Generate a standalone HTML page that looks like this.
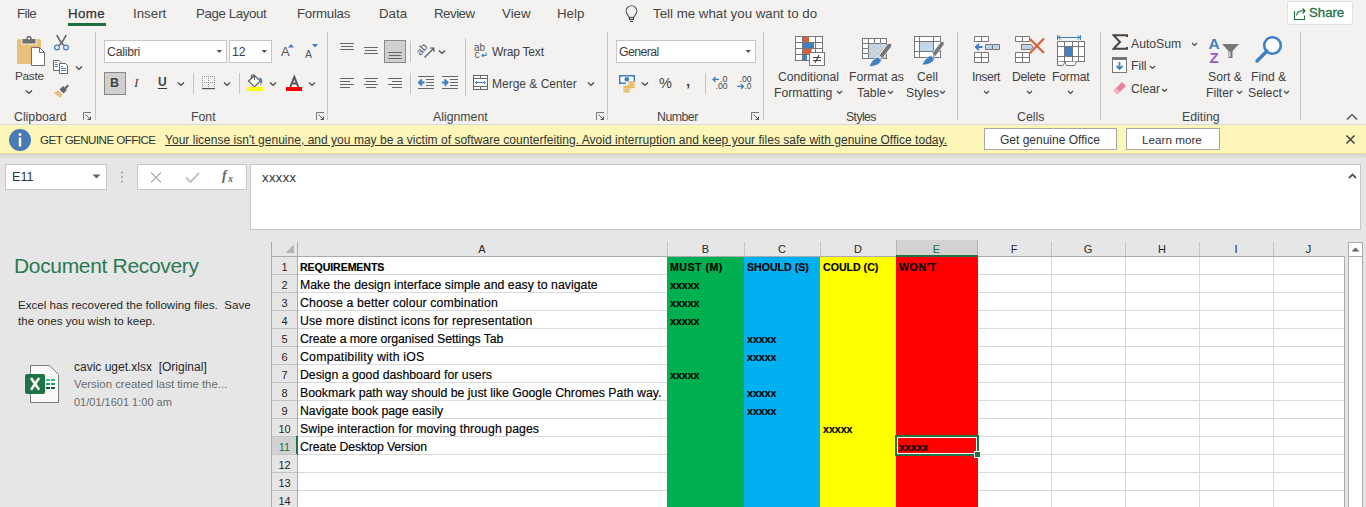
<!DOCTYPE html>
<html><head><meta charset="utf-8">
<style>
*{box-sizing:border-box;margin:0;padding:0}
html,body{width:1366px;height:507px;overflow:hidden;background:#e6e6e6;font-family:"Liberation Sans",sans-serif;color:#262626}
.a{position:absolute;white-space:pre}
#tabs{position:absolute;left:0;top:0;width:1366px;height:124px;background:#f3f2f1}
#ribbon{position:absolute;left:0;top:0;width:1366px;height:124px}
.tab{position:absolute;top:6px;font-size:13.3px;color:#444}
.sep{position:absolute;width:1px;background:#c8c6c4}
.glabel{position:absolute;top:110px;font-size:12.3px;color:#444}
.rt{position:absolute;font-size:12.6px;color:#404040;white-space:pre}
#banner{position:absolute;left:0;top:124px;width:1366px;height:30px;background:#fcf6b8;border-top:1px solid #d9d9d9;border-bottom:1px solid #e4da9a}
#fbar{position:absolute;left:0;top:154px;width:1366px;height:86px;background:#e6e6e6}
#grid{position:absolute;left:271px;top:241px;width:1095px;height:266px;background:#fff}
.ch{position:absolute;top:0;height:16px;font-size:11.5px;text-align:center;color:#262626;background:#e6e6e6}
.rh{position:absolute;left:0;width:26px;font-size:12px;text-align:center;color:#262626}
.cell{position:absolute;font-size:12.3px;color:#000;white-space:pre;-webkit-text-stroke:0.15px #000}
</style></head><body>
<div id="tabs">
  <span class="tab" style="left:17px;letter-spacing:-0.6px">File</span>
  <span class="tab" style="left:68px;color:#333;-webkit-text-stroke:0.25px #333;letter-spacing:0.4px">Home</span>
  <div class="a" style="left:68px;top:23px;width:38px;height:3px;background:#1e6e42"></div>
  <span class="tab" style="left:133px">Insert</span>
  <span class="tab" style="left:196px;letter-spacing:-0.4px">Page Layout</span>
  <span class="tab" style="left:297px;letter-spacing:-0.3px">Formulas</span>
  <span class="tab" style="left:379px">Data</span>
  <span class="tab" style="left:434px;letter-spacing:-0.5px">Review</span>
  <span class="tab" style="left:502px">View</span>
  <span class="tab" style="left:557px">Help</span>
  <span class="tab" style="left:653px">Tell me what you want to do</span>
</div>
<div id="ribbon">
<!-- Clipboard -->
<svg class="a" style="left:15px;top:34px" width="32" height="34" viewBox="0 0 32 34">
  <rect x="2" y="5" width="24" height="25" rx="1.5" fill="#e8c07a"/>
  <path d="M6.5 4.5 h15 v6 h-15z" fill="#f3f2f1"/>
  <path d="M7.5 5 h13 v4.5 h-13z" fill="#6e6e6e"/>
  <rect x="11.5" y="2" width="5" height="4" rx="1.5" fill="#6e6e6e"/>
  <rect x="13" y="3.5" width="2" height="2" fill="#f3f2f1"/>
  <path d="M16.5 13.5 h8 l5 5 v13 h-13z" fill="#fff" stroke="#6e6e6e" stroke-width="1"/>
  <path d="M24.5 13.5 v5 h5" fill="none" stroke="#6e6e6e" stroke-width="1"/>
</svg>
<span class="rt" style="left:15px;top:69px;font-size:11.8px;letter-spacing:-0.3px">Paste</span>
<svg class="a" style="left:25px;top:89px" width="8" height="6"><path d="M1 1.5 L4 4.5 L7 1.5" fill="none" stroke="#444" stroke-width="1.2"/></svg>
<svg class="a" style="left:53px;top:34px" width="17" height="17" viewBox="0 0 17 17">
  <path d="M3.8 1 Q6.5 7 10.8 11.5 M13.2 1 Q10.5 7 6.2 11.5" stroke="#666" stroke-width="1.7" fill="none"/>
  <circle cx="4" cy="13.5" r="2.4" fill="none" stroke="#3f7fc6" stroke-width="1.2"/>
  <circle cx="13" cy="13.5" r="2.4" fill="none" stroke="#3f7fc6" stroke-width="1.2"/>
</svg>
<svg class="a" style="left:52px;top:59px" width="18" height="16" viewBox="0 0 18 16">
  <path d="M1.5 1.5 H7 L9 3.5 V11.5 H1.5z" fill="#fff" stroke="#666"/>
  <path d="M7.5 4.5 H13.5 L15.5 6.5 V14.5 H7.5z" fill="#fff" stroke="#666"/>
  <path d="M3 3.5 H5 M3 5.5 H6 M3 7.5 H6 M9 7.5 H11 M9 9.5 H14 M9 11.5 H14" stroke="#3f7fc6"/>
</svg>
<svg class="a" style="left:75px;top:65px" width="8" height="6"><path d="M1 1.5 L4 4.5 L7 1.5" fill="none" stroke="#444" stroke-width="1.2"/></svg>
<svg class="a" style="left:53px;top:83px" width="17" height="16" viewBox="0 0 17 16">
  <path d="M11 5 L14.5 1.5 L16 3 L12.5 6.5z" fill="#666"/>
  <path d="M6.5 6.5 L10 3 L14 7 L10.5 10.5z" fill="#666"/>
  <path d="M0.5 9.5 L5.5 7.5 L9.5 11.5 L7 15 C5 13 2.5 11 0.5 9.5z" fill="#e8c07a"/>
</svg>
<span class="glabel" style="left:14px">Clipboard</span>
<svg class="a" style="left:83px;top:112px" width="9" height="9"><path d="M0.5 8 V0.5 H8" fill="none" stroke="#777"/><path d="M2.5 2.5 L7.5 7.5 M4.5 7.5 H7.5 V4.5" fill="none" stroke="#555"/></svg>
<div class="sep" style="left:95px;top:32px;height:88px"></div>
<!-- Font -->
<div class="a" style="left:104px;top:40px;width:123px;height:23px;background:#fff;border:1px solid #c8c6c4"></div>
<span class="rt" style="left:107px;top:45px;font-size:12.3px;letter-spacing:-0.25px">Calibri</span>
<svg class="a" style="left:216px;top:49px" width="7" height="5"><path d="M0.5 1 H6 L3.25 4z" fill="#555"/></svg>
<div class="a" style="left:229px;top:40px;width:43px;height:23px;background:#fff;border:1px solid #c8c6c4"></div>
<span class="rt" style="left:232px;top:45px;font-size:12.3px">12</span>
<svg class="a" style="left:261px;top:49px" width="7" height="5"><path d="M0.5 1 H6 L3.25 4z" fill="#555"/></svg>
<span class="rt" style="left:281px;top:44px;font-size:13px;color:#555">A</span>
<svg class="a" style="left:288px;top:44px" width="6" height="4"><path d="M0 3.5 L3 0 L6 3.5z" fill="#3f7fc6"/></svg>
<span class="rt" style="left:305px;top:48px;font-size:10.5px;color:#555">A</span>
<svg class="a" style="left:312px;top:44px" width="6" height="4"><path d="M0 0 L6 0 L3 3.5z" fill="#3f7fc6"/></svg>
<div class="a" style="left:104px;top:72px;width:22px;height:23px;background:#d2d0ce;border:1px solid #8a8886"></div>
<span class="rt" style="left:110px;top:76px;font-size:12.5px;font-weight:bold;color:#444">B</span>
<span class="rt" style="left:134px;top:75px;font-size:13.5px;font-style:italic;color:#444;font-family:'Liberation Serif'">I</span>
<span class="rt" style="left:158px;top:75px;font-size:12px;font-weight:bold;color:#444">U</span>
<div class="a" style="left:158px;top:88px;width:9px;height:1px;background:#333"></div>
<svg class="a" style="left:177px;top:81px" width="8" height="6"><path d="M1 1.5 L4 4.5 L7 1.5" fill="none" stroke="#444" stroke-width="1.2"/></svg>
<div class="sep" style="left:193px;top:73px;height:21px"></div>
<svg class="a" style="left:201px;top:75px" width="15" height="15" viewBox="0 0 15 15">
  <g fill="#8a8a8a">
  <rect x="1" y="1" width="1" height="1"/><rect x="3" y="1" width="1" height="1"/><rect x="5" y="1" width="1" height="1"/><rect x="7" y="1" width="1" height="1"/><rect x="9" y="1" width="1" height="1"/><rect x="11" y="1" width="1" height="1"/><rect x="13" y="1" width="1" height="1"/>
  <rect x="1" y="7" width="1" height="1"/><rect x="3" y="7" width="1" height="1"/><rect x="5" y="7" width="1" height="1"/><rect x="7" y="7" width="1" height="1"/><rect x="9" y="7" width="1" height="1"/><rect x="11" y="7" width="1" height="1"/><rect x="13" y="7" width="1" height="1"/>
  <rect x="1" y="3" width="1" height="1"/><rect x="1" y="5" width="1" height="1"/><rect x="1" y="9" width="1" height="1"/><rect x="1" y="11" width="1" height="1"/>
  <rect x="7" y="3" width="1" height="1"/><rect x="7" y="5" width="1" height="1"/><rect x="7" y="9" width="1" height="1"/><rect x="7" y="11" width="1" height="1"/>
  <rect x="13" y="3" width="1" height="1"/><rect x="13" y="5" width="1" height="1"/><rect x="13" y="9" width="1" height="1"/><rect x="13" y="11" width="1" height="1"/>
  </g>
  <rect x="1" y="13" width="13" height="1.2" fill="#555"/>
</svg>
<svg class="a" style="left:223px;top:81px" width="8" height="6"><path d="M1 1.5 L4 4.5 L7 1.5" fill="none" stroke="#444" stroke-width="1.2"/></svg>
<div class="sep" style="left:239px;top:73px;height:21px"></div>
<svg class="a" style="left:247px;top:74px" width="17" height="18" viewBox="0 0 17 18">
  <path d="M1.5 7 L7.5 1.5 L13.5 7 L7.5 12.8z" fill="#fff" stroke="#555" stroke-width="1.1"/>
  <path d="M4.5 4.5 V2 Q4.5 0.8 6 0.8 Q7.5 0.8 7.5 2 V6" fill="none" stroke="#555" stroke-width="1.1"/>
  <path d="M12.5 3.5 C15.5 4.5 16.5 7.5 13.5 11.5 C13.5 9 14 7 12.5 5.5z" fill="#3f7fc6"/>
  <rect x="0" y="13" width="16" height="4" fill="#ffff00"/>
</svg>
<svg class="a" style="left:269px;top:81px" width="8" height="6"><path d="M1 1.5 L4 4.5 L7 1.5" fill="none" stroke="#444" stroke-width="1.2"/></svg>
<svg class="a" style="left:286px;top:74px" width="17" height="18" viewBox="0 0 17 18">
  <path d="M4.3 13 L8.3 3 L12.3 13 M5.8 9.5 H10.8" fill="none" stroke="#555" stroke-width="2"/>
  <rect x="0" y="13" width="16" height="4" fill="#ff0000"/>
</svg>
<svg class="a" style="left:308px;top:81px" width="8" height="6"><path d="M1 1.5 L4 4.5 L7 1.5" fill="none" stroke="#444" stroke-width="1.2"/></svg>
<span class="glabel" style="left:191px">Font</span>
<svg class="a" style="left:316px;top:112px" width="9" height="9"><path d="M0.5 8 V0.5 H8" fill="none" stroke="#777"/><path d="M2.5 2.5 L7.5 7.5 M4.5 7.5 H7.5 V4.5" fill="none" stroke="#555"/></svg>
<div class="sep" style="left:327px;top:32px;height:88px"></div>
<!-- Alignment -->
<svg class="a" style="left:340px;top:42px" width="15" height="9"><path d="M0 1.5 H14 M1 4.5 H13 M0 7.5 H14" stroke="#666" stroke-width="1"/></svg>
<svg class="a" style="left:364px;top:46px" width="15" height="9"><path d="M0 1.5 H14 M1 4.5 H13 M0 7.5 H14" stroke="#666" stroke-width="1"/></svg>
<div class="a" style="left:384px;top:40px;width:22px;height:23px;background:#d2d0ce;border:1px solid #8a8886"></div>
<svg class="a" style="left:388px;top:51px" width="15" height="9"><path d="M0 1.5 H14 M1 4.5 H13 M0 7.5 H14" stroke="#666" stroke-width="1"/></svg>
<div class="sep" style="left:410px;top:41px;height:21px"></div>
<svg class="a" style="left:417px;top:43px" width="18" height="16" viewBox="0 0 18 16">
  <text x="0" y="0" font-size="10.5" font-family="Liberation Sans" fill="#555" transform="translate(3.5 13) rotate(-50)">ab</text>
  <path d="M7.5 14.5 L16.5 5.5 M13 5 H16.8 V8.8" fill="none" stroke="#555" stroke-width="1.1"/>
</svg>
<svg class="a" style="left:438px;top:49px" width="8" height="6"><path d="M1 1.5 L4 4.5 L7 1.5" fill="none" stroke="#444" stroke-width="1.2"/></svg>
<div class="sep" style="left:465px;top:38px;height:58px"></div>
<svg class="a" style="left:474px;top:43px" width="14" height="16" viewBox="0 0 14 16">
  <text x="0" y="8" font-size="10" font-family="Liberation Sans" fill="#555">ab</text>
  <text x="0.5" y="15" font-size="10" font-family="Liberation Sans" fill="#555">c</text>
  <path d="M12 9.5 V12.5 H8 M9.5 11 L8 12.5 L9.5 14" fill="none" stroke="#3f7fc6" stroke-width="1.1"/>
</svg>
<span class="rt" style="left:492px;top:45px;font-size:12px;letter-spacing:-0.2px">Wrap Text</span>
<svg class="a" style="left:340px;top:77px" width="15" height="12"><path d="M0 1.5 H14 M0 4.5 H10 M0 7.5 H14 M0 10.5 H10" stroke="#666" stroke-width="1"/></svg>
<svg class="a" style="left:364px;top:77px" width="15" height="12"><path d="M0 1.5 H14 M2 4.5 H12 M0 7.5 H14 M2 10.5 H12" stroke="#666" stroke-width="1"/></svg>
<svg class="a" style="left:388px;top:77px" width="15" height="12"><path d="M0 1.5 H14 M4 4.5 H14 M0 7.5 H14 M4 10.5 H14" stroke="#666" stroke-width="1"/></svg>
<div class="sep" style="left:410px;top:73px;height:21px"></div>
<svg class="a" style="left:418px;top:76px" width="17" height="14" viewBox="0 0 17 14">
  <path d="M0 0.5 H16 M8 3.5 H16 M8 6.5 H16 M8 9.5 H16 M0 12.5 H16" stroke="#666"/>
  <path d="M6.5 6.5 H1.5 M4 3.5 L1 6.5 L4 9.5" fill="none" stroke="#3f7fc6" stroke-width="2"/>
</svg>
<svg class="a" style="left:442px;top:76px" width="17" height="14" viewBox="0 0 17 14">
  <path d="M0 0.5 H16 M8 3.5 H16 M8 6.5 H16 M8 9.5 H16 M0 12.5 H16" stroke="#666"/>
  <path d="M0 6.5 H5 M2.5 3.5 L5.5 6.5 L2.5 9.5" fill="none" stroke="#3f7fc6" stroke-width="2"/>
</svg>
<svg class="a" style="left:473px;top:75px" width="16" height="16" viewBox="0 0 16 16">
  <rect x="0.5" y="0.5" width="14" height="14" fill="#fff" stroke="#666"/>
  <path d="M0.5 3.5 H14.5 M0.5 11.5 H14.5 M7.5 0.5 V3.5 M7.5 11.5 V14.5" stroke="#666"/>
  <path d="M2.5 7.5 H12.5 M4 6 L2.5 7.5 L4 9 M11 6 L12.5 7.5 L11 9" fill="none" stroke="#3f7fc6"/>
</svg>
<span class="rt" style="left:492px;top:77px;font-size:12px">Merge &amp; Center</span>
<svg class="a" style="left:587px;top:81px" width="8" height="6"><path d="M1 1.5 L4 4.5 L7 1.5" fill="none" stroke="#444" stroke-width="1.2"/></svg>
<span class="glabel" style="left:433px">Alignment</span>
<svg class="a" style="left:596px;top:112px" width="9" height="9"><path d="M0.5 8 V0.5 H8" fill="none" stroke="#777"/><path d="M2.5 2.5 L7.5 7.5 M4.5 7.5 H7.5 V4.5" fill="none" stroke="#555"/></svg>
<div class="sep" style="left:607px;top:32px;height:88px"></div>
<!-- Number -->
<div class="a" style="left:616px;top:40px;width:140px;height:23px;background:#fff;border:1px solid #c8c6c4"></div>
<span class="rt" style="left:619px;top:45px;font-size:12.3px;letter-spacing:-0.6px">General</span>
<svg class="a" style="left:745px;top:49px" width="7" height="5"><path d="M0.5 1 H6 L3.25 4z" fill="#555"/></svg>
<svg class="a" style="left:618px;top:74px" width="19" height="19" viewBox="0 0 19 19">
  <rect x="1" y="1" width="16" height="9" fill="#3f7fc6"/>
  <path d="M3.5 2.6 H14.5 L15.5 3.6 V7.4 L14.5 8.4 H3.5 L2.5 7.4 V3.6z" fill="#fff"/>
  <circle cx="8.8" cy="5.4" r="2.4" fill="#3f7fc6"/>
  <rect x="8" y="7.5" width="10" height="12" fill="#f3f2f1"/>
  <ellipse cx="13.5" cy="8.3" rx="3.6" ry="1.3" fill="#e8b863"/>
  <ellipse cx="13.5" cy="10.8" rx="3.6" ry="1.1" fill="#e8b863"/>
  <ellipse cx="13.5" cy="13.2" rx="3.6" ry="1.1" fill="#e8b863"/>
  <ellipse cx="8.7" cy="12.8" rx="3.6" ry="1.3" fill="#e8b863"/>
  <ellipse cx="8.7" cy="15.3" rx="3.6" ry="1.1" fill="#e8b863"/>
  <ellipse cx="8.7" cy="17.6" rx="3.6" ry="1.1" fill="#e8b863"/>
</svg>
<svg class="a" style="left:641px;top:81px" width="8" height="6"><path d="M1 1.5 L4 4.5 L7 1.5" fill="none" stroke="#444" stroke-width="1.2"/></svg>
<span class="rt" style="left:659px;top:75px;font-size:14.5px;color:#444">%</span>
<span class="rt" style="left:686px;top:72px;font-size:15px;font-weight:bold;color:#444">,</span>
<div class="sep" style="left:705px;top:73px;height:21px"></div>
<svg class="a" style="left:712px;top:75px" width="17" height="15" viewBox="0 0 17 15">
  <path d="M1 4.4 H7 M3.6 2 L1.1 4.4 L3.6 6.8" fill="none" stroke="#3f7fc6" stroke-width="1.4"/>
  <text x="8" y="6.9" font-size="8.4" font-family="Liberation Sans" fill="#444" textLength="7.5" lengthAdjust="spacingAndGlyphs">.0</text>
  <text x="3.5" y="13.8" font-size="8.4" font-family="Liberation Sans" fill="#444" textLength="12" lengthAdjust="spacingAndGlyphs">.00</text>
</svg>
<svg class="a" style="left:736px;top:75px" width="17" height="15" viewBox="0 0 17 15">
  <text x="3.5" y="6.9" font-size="8.4" font-family="Liberation Sans" fill="#444" textLength="12" lengthAdjust="spacingAndGlyphs">.00</text>
  <path d="M1 11.4 H7.5 M5 9 L7.5 11.4 L5 13.8" fill="none" stroke="#3f7fc6" stroke-width="1.4"/>
  <text x="8.5" y="13.8" font-size="8.4" font-family="Liberation Sans" fill="#444" textLength="7" lengthAdjust="spacingAndGlyphs">.0</text>
</svg>
<span class="glabel" style="left:657px;letter-spacing:-0.5px">Number</span>
<svg class="a" style="left:751px;top:112px" width="9" height="9"><path d="M0.5 8 V0.5 H8" fill="none" stroke="#777"/><path d="M2.5 2.5 L7.5 7.5 M4.5 7.5 H7.5 V4.5" fill="none" stroke="#555"/></svg>
<div class="sep" style="left:763px;top:32px;height:88px"></div>
<!-- Styles -->
<svg class="a" style="left:794px;top:35px" width="32" height="32" viewBox="0 0 32 32">
  <rect x="1.5" y="1.5" width="27" height="24" fill="#fff" stroke="#777"/>
  <path d="M1.5 7.5 H28.5 M1.5 13.5 H28.5 M1.5 19.5 H28.5 M8.5 1.5 V25.5 M21.5 1.5 V25.5" stroke="#777"/>
  <rect x="9" y="2" width="6" height="5" fill="#d9603b"/>
  <rect x="9" y="8" width="11" height="5" fill="#3f7fc6"/>
  <rect x="9" y="14" width="8.5" height="5" fill="#d9603b"/>
  <rect x="9" y="20" width="4" height="5.5" fill="#3f7fc6"/>
  <rect x="15.5" y="17.5" width="15" height="13" fill="#fff" stroke="#777"/>
  <path d="M19 22.5 H27 M19 25.5 H27 M25 20 L21 28" stroke="#444" stroke-width="1.1"/>
</svg>
<span class="rt" style="left:778px;top:70px;font-size:12.2px">Conditional</span>
<span class="rt" style="left:774px;top:86px;font-size:12.2px">Formatting</span>
<svg class="a" style="left:836px;top:90px" width="7" height="5"><path d="M1 1 L3.5 3.5 L6 1" fill="none" stroke="#444" stroke-width="1.1"/></svg>
<svg class="a" style="left:861px;top:37px" width="31" height="30" viewBox="0 0 31 30">
  <rect x="1.5" y="1.5" width="24" height="20" fill="#fff" stroke="#777"/>
  <rect x="8" y="7" width="17" height="14" fill="#c3d6ea"/>
  <path d="M1.5 6.5 H25.5 M1.5 11.5 H25.5 M1.5 16.5 H25.5 M7.5 1.5 V21.5 M13.5 1.5 V21.5 M19.5 1.5 V21.5" stroke="#777"/>
  <path d="M13.5 6.5 V21.5 M19.5 6.5 V21.5 M7.5 11.5 H25.5 M7.5 16.5 H25.5" stroke="#fff" stroke-opacity="0.6"/>
  <path d="M18 18.5 L27 6.5 L30.5 6.5 L30.5 9.5 L21.5 21.5z" fill="#777" stroke="#f3f2f1" stroke-width="0.8"/>
  <path d="M8 29.5 C10 25 13 21 17 20 L20.5 23 C19.5 27 15 29.5 8 29.5z" fill="#3f7fc6" stroke="#f3f2f1" stroke-width="0.8"/>
</svg>
<span class="rt" style="left:849px;top:70px;font-size:12.2px">Format as</span>
<span class="rt" style="left:857px;top:86px;font-size:12.2px">Table</span>
<svg class="a" style="left:887px;top:90px" width="7" height="5"><path d="M1 1 L3.5 3.5 L6 1" fill="none" stroke="#444" stroke-width="1.1"/></svg>
<svg class="a" style="left:913px;top:35px" width="31" height="31" viewBox="0 0 31 31">
  <rect x="1.5" y="1.5" width="26" height="21" fill="#fff" stroke="#777"/>
  <rect x="6.5" y="6.5" width="14" height="10" fill="#c3d6ea"/>
  <path d="M1.5 6.5 H27.5 M1.5 16.5 H27.5 M6.5 1.5 V22.5 M20.5 1.5 V22.5" stroke="#777"/>
  <path d="M19 18.5 L28 6.5 L31 6.5 L31 9.5 L22.5 21.5z" fill="#777" stroke="#f3f2f1" stroke-width="0.8"/>
  <path d="M9 30 C11 25.5 14 21.5 18 20.5 L21.5 23.5 C20.5 27.5 16 30 9 30z" fill="#3f7fc6" stroke="#f3f2f1" stroke-width="0.8"/>
</svg>
<span class="rt" style="left:917px;top:70px;font-size:12.2px">Cell</span>
<span class="rt" style="left:906px;top:86px;font-size:12.2px">Styles</span>
<svg class="a" style="left:939px;top:90px" width="7" height="5"><path d="M1 1 L3.5 3.5 L6 1" fill="none" stroke="#444" stroke-width="1.1"/></svg>
<span class="glabel" style="left:846px;letter-spacing:-0.6px">Styles</span>
<div class="sep" style="left:957px;top:32px;height:88px"></div>
<!-- Cells -->
<svg class="a" style="left:973px;top:35px" width="28" height="29" viewBox="0 0 28 29">
  <path d="M1.5 1.5 H15.5 V6.5 H1.5z M8.5 1.5 V6.5" fill="#fff" stroke="#777"/>
  <path d="M12.5 9.5 H26.5 V14.5 H12.5z" fill="#bcd3ea" stroke="#777"/>
  <path d="M19.5 9.5 V14.5" stroke="#777"/>
  <path d="M9.5 12 H3 M6 9 L2.8 12 L6 15" fill="none" stroke="#3f7fc6" stroke-width="1.8"/>
  <path d="M1.5 17.5 H15.5 V27.5 H1.5z M8.5 17.5 V27.5 M1.5 22.5 H15.5" fill="#fff" stroke="#777"/>
</svg>
<span class="rt" style="left:972px;top:70px;font-size:12.2px;letter-spacing:-0.4px">Insert</span>
<svg class="a" style="left:983px;top:90px" width="7" height="5"><path d="M1 1 L3.5 3.5 L6 1" fill="none" stroke="#444" stroke-width="1.1"/></svg>
<svg class="a" style="left:1014px;top:35px" width="32" height="29" viewBox="0 0 32 29">
  <path d="M1.5 1.5 H15.5 V6.5 H1.5z M8.5 1.5 V6.5" fill="#fff" stroke="#777"/>
  <path d="M7.5 9.5 H17 L19 12 L17 14.5 H7.5z" fill="#bcd3ea" stroke="#777"/>
  <path d="M1.5 17.5 H15.5 V27.5 H1.5z M8.5 17.5 V27.5 M1.5 22.5 H15.5" fill="#fff" stroke="#777"/>
  <path d="M16 4 L30 18 M30 3.5 L15.5 18.5" stroke="#d9603b" stroke-width="2.2"/>
</svg>
<span class="rt" style="left:1012px;top:70px;font-size:12.2px;letter-spacing:-0.3px">Delete</span>
<svg class="a" style="left:1026px;top:90px" width="7" height="5"><path d="M1 1 L3.5 3.5 L6 1" fill="none" stroke="#444" stroke-width="1.1"/></svg>
<svg class="a" style="left:1056px;top:34px" width="30" height="33" viewBox="0 0 30 33">
  <path d="M1.5 1 V6 M24.5 1 V6 M2 3.5 H24 M4.5 1.5 L2 3.5 L4.5 5.5 M21.5 1.5 L24 3.5 L21.5 5.5" fill="none" stroke="#3f7fc6"/>
  <rect x="1.5" y="7.5" width="27" height="20" fill="#fff" stroke="#777"/>
  <path d="M1.5 12.5 H28.5 M1.5 22.5 H28.5 M8.5 7.5 V27.5 M16.5 7.5 V12.5 M16.5 22.5 V27.5 M22.5 7.5 V27.5 M16.5 12.5 V22.5" stroke="#777"/>
  <rect x="9" y="13" width="7" height="9" fill="#3f7fc6"/>
  <path d="M1.5 27.5 V31.5 H7 L9 28 M9 28 L10.5 31.5 H18.5 L20.5 27.5" fill="#fff" stroke="#777"/>
</svg>
<span class="rt" style="left:1052px;top:70px;font-size:12.2px;letter-spacing:-0.2px">Format</span>
<svg class="a" style="left:1067px;top:90px" width="7" height="5"><path d="M1 1 L3.5 3.5 L6 1" fill="none" stroke="#444" stroke-width="1.1"/></svg>
<span class="glabel" style="left:1017px">Cells</span>
<div class="sep" style="left:1100px;top:32px;height:88px"></div>
<!-- Editing -->
<svg class="a" style="left:1112px;top:34px" width="16" height="16" viewBox="0 0 16 16"><path d="M15 3 V1.2 H1.5 L8 8 L1.5 14.8 H15 V13" fill="none" stroke="#444" stroke-width="2"/></svg>
<span class="rt" style="left:1131px;top:37px;font-size:12.2px">AutoSum</span>
<svg class="a" style="left:1191px;top:42px" width="7" height="5"><path d="M1 1 L3.5 3.5 L6 1" fill="none" stroke="#444" stroke-width="1.1"/></svg>
<svg class="a" style="left:1112px;top:57px" width="15" height="16" viewBox="0 0 15 16">
  <rect x="0.5" y="0.5" width="14" height="15" fill="#fff" stroke="#777"/>
  <rect x="0.5" y="0.5" width="14" height="2.5" fill="#777"/>
  <path d="M7.5 5 V12 M4.5 9 L7.5 12 L10.5 9" fill="none" stroke="#3f7fc6" stroke-width="1.8"/>
</svg>
<span class="rt" style="left:1131px;top:59px;font-size:12.2px">Fill</span>
<svg class="a" style="left:1149px;top:65px" width="7" height="5"><path d="M1 1 L3.5 3.5 L6 1" fill="none" stroke="#444" stroke-width="1.1"/></svg>
<svg class="a" style="left:1113px;top:81px" width="14" height="14" viewBox="0 0 14 14">
  <path d="M4 13 L0.5 9.5 L9 1 L13 5 L5 13z" fill="#e8829a"/>
  <path d="M0.5 9.5 L3 7 L7 11 L4.5 13.5z" fill="#f3b3c1"/>
</svg>
<span class="rt" style="left:1131px;top:82px;font-size:12.2px">Clear</span>
<svg class="a" style="left:1161px;top:88px" width="7" height="5"><path d="M1 1 L3.5 3.5 L6 1" fill="none" stroke="#444" stroke-width="1.1"/></svg>
<svg class="a" style="left:1209px;top:36px" width="32" height="28" viewBox="0 0 32 28">
  <text x="-0.5" y="13" font-size="15.5" font-family="Liberation Sans" font-weight="bold" fill="#3f7fc6">A</text>
  <text x="0.5" y="26.8" font-size="15" font-family="Liberation Sans" font-weight="bold" fill="#9b59c4">Z</text>
  <path d="M13 8 H30 L23.5 15 V22 H19.5 V15z" fill="#777"/>
  <path d="M20.8 15.5 V21" stroke="#fff" stroke-width="1"/>
</svg>
<span class="rt" style="left:1208px;top:70px;font-size:12.2px">Sort &amp;</span>
<span class="rt" style="left:1206px;top:86px;font-size:12.2px">Filter</span>
<svg class="a" style="left:1236px;top:90px" width="7" height="5"><path d="M1 1 L3.5 3.5 L6 1" fill="none" stroke="#444" stroke-width="1.1"/></svg>
<svg class="a" style="left:1254px;top:35px" width="30" height="29" viewBox="0 0 30 29">
  <circle cx="18.5" cy="10.5" r="8.3" fill="#fff" stroke="#3f7fc6" stroke-width="2.6"/>
  <path d="M13 16 L3 26" stroke="#3f7fc6" stroke-width="3.4" stroke-linecap="round"/>
</svg>
<span class="rt" style="left:1251px;top:70px;font-size:12.2px">Find &amp;</span>
<span class="rt" style="left:1248px;top:86px;font-size:12.2px">Select</span>
<svg class="a" style="left:1283px;top:90px" width="7" height="5"><path d="M1 1 L3.5 3.5 L6 1" fill="none" stroke="#444" stroke-width="1.1"/></svg>
<span class="glabel" style="left:1182px">Editing</span>
<div class="sep" style="left:1300px;top:32px;height:88px"></div>
<svg class="a" style="left:1346px;top:113px" width="12" height="8"><path d="M1 6.5 L6 1.5 L11 6.5" fill="none" stroke="#444" stroke-width="1.2"/></svg>
<!-- Share -->
<div class="a" style="left:1287px;top:1px;width:66px;height:24px;background:#fff;border:1px solid #e1dfdd;border-radius:3px"></div>
<svg class="a" style="left:1293px;top:6px" width="14" height="14" viewBox="0 0 14 14">
  <path d="M1.5 5 V13.5 H11.5 V9.5" fill="none" stroke="#1e6e42" stroke-width="1.1"/>
  <path d="M3.5 9.5 C4 6 7 4 11.5 5 M9.5 2.5 L12 5 L9.5 7.5" fill="none" stroke="#1e6e42" stroke-width="1.1"/>
</svg>
<span class="rt" style="left:1309px;top:5px;font-size:13.2px;color:#1e6e42;-webkit-text-stroke:0.3px #1e6e42">Share</span>
<!-- Lightbulb -->
<svg class="a" style="left:625px;top:5px" width="13" height="18" viewBox="0 0 13 18">
  <path d="M4.5 12.5 L2.3 9.3 A5.3 5.3 0 1 1 10.7 9.3 L8.5 12.5" fill="none" stroke="#444" stroke-width="1.1"/>
  <rect x="4.5" y="12.5" width="4" height="2" fill="none" stroke="#444" stroke-width="1.1"/>
  <path d="M5 16.5 H8" stroke="#444" stroke-width="1.1"/>
</svg>
</div>
<div id="banner"></div>
<svg class="a" style="left:9px;top:129px" width="22" height="22" viewBox="0 0 22 22">
  <circle cx="11" cy="11" r="11" fill="#4a7ab5"/>
  <circle cx="11" cy="5.5" r="1.5" fill="#fff"/>
  <rect x="9.8" y="8.5" width="2.4" height="9" fill="#fff"/>
</svg>
<span class="a" style="left:40px;top:133px;font-size:11.6px;letter-spacing:-0.55px;color:#333">GET GENUINE OFFICE</span>
<span class="a" style="left:165px;top:133px;font-size:12px;letter-spacing:0.025px;color:#333;text-decoration:underline">Your license isn't genuine, and you may be a victim of software counterfeiting. Avoid interruption and keep your files safe with genuine Office today.</span>
<div class="a" style="left:984px;top:128px;width:133px;height:22px;background:#fff;border:1px solid #a6a6a6"></div>
<span class="a" style="left:1000px;top:133px;font-size:12px;color:#333">Get genuine Office</span>
<div class="a" style="left:1126px;top:128px;width:94px;height:22px;background:#fff;border:1px solid #a6a6a6"></div>
<span class="a" style="left:1142px;top:133px;font-size:11.7px;color:#333">Learn more</span>
<svg class="a" style="left:1345px;top:134px" width="11" height="11"><path d="M1.5 1.5 L9.5 9.5 M9.5 1.5 L1.5 9.5" stroke="#444" stroke-width="1.6"/></svg>
<div id="fbar"></div>
<div class="a" style="left:0;top:154px;width:1366px;height:5px;background:linear-gradient(#d4d4d4,#e6e6e6)"></div>
<div class="a" style="left:5px;top:164px;width:102px;height:26px;background:#fff;border:1px solid #c6c6c6"></div>
<span class="a" style="left:12px;top:170px;font-size:12.7px;color:#333">E11</span>
<svg class="a" style="left:92px;top:174px" width="9" height="5"><path d="M0.5 0.5 H8.5 L4.5 4.5z" fill="#666"/></svg>
<svg class="a" style="left:120px;top:171px" width="4" height="12"><circle cx="2" cy="1.5" r="1" fill="#9a9a9a"/><circle cx="2" cy="6" r="1" fill="#9a9a9a"/><circle cx="2" cy="10.5" r="1" fill="#9a9a9a"/></svg>
<div class="a" style="left:137px;top:164px;width:110px;height:26px;background:#fff;border:1px solid #c6c6c6"></div>
<svg class="a" style="left:150px;top:172px" width="12" height="11"><path d="M1 0.5 L11 10.5 M11 0.5 L1 10.5" stroke="#b0b0b0" stroke-width="1.3"/></svg>
<svg class="a" style="left:185px;top:172px" width="15" height="11"><path d="M1 5.5 L5.5 10 L14 1" fill="none" stroke="#c0c0c0" stroke-width="2"/></svg>
<span class="a" style="left:222px;top:168px;font-size:14px;font-style:italic;font-weight:bold;color:#666;font-family:'Liberation Serif'">f</span>
<span class="a" style="left:228px;top:173px;font-size:10px;font-style:italic;font-weight:bold;color:#666;font-family:'Liberation Serif'">x</span>
<div class="a" style="left:250px;top:164px;width:1111px;height:66px;background:#fff;border:1px solid #c6c6c6"></div>
<span class="a" style="left:262px;top:170px;font-size:13px;color:#333;letter-spacing:0.4px">xxxxx</span>
<svg class="a" style="left:1348px;top:172px" width="9" height="8"><path d="M1 6 L4.5 2.5 L8 6" fill="none" stroke="#555" stroke-width="1.8"/></svg>
<!-- Doc recovery -->
<span class="a" style="left:14px;top:254px;font-size:21px;letter-spacing:-0.33px;color:#2b7a52">Document Recovery</span>
<span class="a" style="left:18px;top:298px;font-size:11.6px;color:#262626">Excel has recovered the following files.  Save</span>
<span class="a" style="left:18px;top:314px;font-size:11.6px;color:#262626">the ones you wish to keep.</span>
<svg class="a" style="left:24px;top:364px" width="36" height="40" viewBox="0 0 36 40">
  <path d="M6.5 1.5 H25.5 L34.5 10.5 V38.5 H6.5z" fill="#fafafa" stroke="#777" stroke-linejoin="round"/>
  <rect x="1" y="10" width="20" height="20" rx="2" fill="#1f7244"/>
  <path d="M7 14 L15.2 25.8 M15.2 14 L7 25.8" stroke="#fff" stroke-width="2.6"/>
  <rect x="22" y="15" width="4" height="2" fill="#33c481"/><rect x="27" y="15" width="4" height="2" fill="#33c481"/>
  <rect x="22" y="19" width="4" height="2" fill="#21a366"/><rect x="27" y="19" width="4" height="2" fill="#21a366"/>
  <rect x="22" y="23" width="4" height="2" fill="#185c37"/><rect x="27" y="23" width="4" height="2" fill="#185c37"/>
</svg>
<span class="a" style="left:74px;top:360px;font-size:12px;color:#262626">cavic uget.xlsx  [Original]</span>
<span class="a" style="left:74px;top:378px;font-size:11.4px;color:#6b6b6b">Version created last time the...</span>
<span class="a" style="left:74px;top:396px;font-size:11px;color:#6b6b6b">01/01/1601 1:00 am</span>
<!--GRID-->
<div class="a" style="left:298px;top:257px;width:1046px;height:250px;background:#fff"></div>
<div class="a" style="left:298px;top:274px;width:1046px;height:1px;background:#d9d9d9"></div>
<div class="a" style="left:298px;top:292px;width:1046px;height:1px;background:#d9d9d9"></div>
<div class="a" style="left:298px;top:310px;width:1046px;height:1px;background:#d9d9d9"></div>
<div class="a" style="left:298px;top:328px;width:1046px;height:1px;background:#d9d9d9"></div>
<div class="a" style="left:298px;top:346px;width:1046px;height:1px;background:#d9d9d9"></div>
<div class="a" style="left:298px;top:364px;width:1046px;height:1px;background:#d9d9d9"></div>
<div class="a" style="left:298px;top:382px;width:1046px;height:1px;background:#d9d9d9"></div>
<div class="a" style="left:298px;top:400px;width:1046px;height:1px;background:#d9d9d9"></div>
<div class="a" style="left:298px;top:418px;width:1046px;height:1px;background:#d9d9d9"></div>
<div class="a" style="left:298px;top:436px;width:1046px;height:1px;background:#d9d9d9"></div>
<div class="a" style="left:298px;top:454px;width:1046px;height:1px;background:#d9d9d9"></div>
<div class="a" style="left:298px;top:472px;width:1046px;height:1px;background:#d9d9d9"></div>
<div class="a" style="left:298px;top:490px;width:1046px;height:1px;background:#d9d9d9"></div>
<div class="a" style="left:298px;top:508px;width:1046px;height:1px;background:#d9d9d9"></div>
<div class="a" style="left:667px;top:257px;width:1px;height:250px;background:#d9d9d9"></div>
<div class="a" style="left:744px;top:257px;width:1px;height:250px;background:#d9d9d9"></div>
<div class="a" style="left:820px;top:257px;width:1px;height:250px;background:#d9d9d9"></div>
<div class="a" style="left:896px;top:257px;width:1px;height:250px;background:#d9d9d9"></div>
<div class="a" style="left:977px;top:257px;width:1px;height:250px;background:#d9d9d9"></div>
<div class="a" style="left:1051px;top:257px;width:1px;height:250px;background:#d9d9d9"></div>
<div class="a" style="left:1125px;top:257px;width:1px;height:250px;background:#d9d9d9"></div>
<div class="a" style="left:1199px;top:257px;width:1px;height:250px;background:#d9d9d9"></div>
<div class="a" style="left:1273px;top:257px;width:1px;height:250px;background:#d9d9d9"></div>
<div class="a" style="left:667px;top:257px;width:77px;height:250px;background:#00b050"></div>
<div class="a" style="left:744px;top:257px;width:76px;height:250px;background:#00b0f0"></div>
<div class="a" style="left:820px;top:257px;width:76px;height:250px;background:#ffff00"></div>
<div class="a" style="left:896px;top:257px;width:82px;height:250px;background:#ff0000"></div>
<div class="a" style="left:1344px;top:257px;width:1px;height:250px;background:#ababab"></div>
<div class="a" style="left:271px;top:242px;width:1px;height:265px;background:#ababab"></div>
<div class="a" style="left:272px;top:256px;width:1073px;height:1px;background:#ababab"></div>
<div class="a" style="left:297px;top:242px;width:1px;height:265px;background:#ababab"></div>
<svg class="a" style="left:285px;top:244px" width="10" height="10"><path d="M9 0.5 V9 H0.5z" fill="#b4b4b4"/></svg>
<div class="a" style="left:667px;top:242px;width:1px;height:14px;background:#c4c4c4"></div>
<div class="a" style="left:297px;top:243px;width:370px;text-align:center;font-size:11px;color:#262626">A</div>
<div class="a" style="left:744px;top:242px;width:1px;height:14px;background:#c4c4c4"></div>
<div class="a" style="left:667px;top:243px;width:77px;text-align:center;font-size:11px;color:#262626">B</div>
<div class="a" style="left:820px;top:242px;width:1px;height:14px;background:#c4c4c4"></div>
<div class="a" style="left:744px;top:243px;width:76px;text-align:center;font-size:11px;color:#262626">C</div>
<div class="a" style="left:896px;top:242px;width:1px;height:14px;background:#c4c4c4"></div>
<div class="a" style="left:820px;top:243px;width:76px;text-align:center;font-size:11px;color:#262626">D</div>
<div class="a" style="left:896px;top:240px;width:82px;height:15px;background:#d2d2d2;border-left:1px solid #b4b4b4;border-right:1px solid #b4b4b4"></div>
<div class="a" style="left:896px;top:255px;width:82px;height:2px;background:#217346"></div>
<div class="a" style="left:896px;top:243px;width:81px;text-align:center;font-size:11px;color:#217346">E</div>
<div class="a" style="left:1051px;top:242px;width:1px;height:14px;background:#c4c4c4"></div>
<div class="a" style="left:977px;top:243px;width:74px;text-align:center;font-size:11px;color:#262626">F</div>
<div class="a" style="left:1125px;top:242px;width:1px;height:14px;background:#c4c4c4"></div>
<div class="a" style="left:1051px;top:243px;width:74px;text-align:center;font-size:11px;color:#262626">G</div>
<div class="a" style="left:1199px;top:242px;width:1px;height:14px;background:#c4c4c4"></div>
<div class="a" style="left:1125px;top:243px;width:74px;text-align:center;font-size:11px;color:#262626">H</div>
<div class="a" style="left:1273px;top:242px;width:1px;height:14px;background:#c4c4c4"></div>
<div class="a" style="left:1199px;top:243px;width:74px;text-align:center;font-size:11px;color:#262626">I</div>
<div class="a" style="left:1273px;top:243px;width:71px;text-align:center;font-size:11px;color:#262626">J</div>
<div class="a" style="left:272px;top:274px;width:25px;height:1px;background:#c4c4c4"></div>
<div class="a" style="left:272px;top:261px;width:25px;text-align:center;font-size:11px;color:#262626">1</div>
<div class="a" style="left:272px;top:292px;width:25px;height:1px;background:#c4c4c4"></div>
<div class="a" style="left:272px;top:279px;width:25px;text-align:center;font-size:11px;color:#262626">2</div>
<div class="a" style="left:272px;top:310px;width:25px;height:1px;background:#c4c4c4"></div>
<div class="a" style="left:272px;top:297px;width:25px;text-align:center;font-size:11px;color:#262626">3</div>
<div class="a" style="left:272px;top:328px;width:25px;height:1px;background:#c4c4c4"></div>
<div class="a" style="left:272px;top:315px;width:25px;text-align:center;font-size:11px;color:#262626">4</div>
<div class="a" style="left:272px;top:346px;width:25px;height:1px;background:#c4c4c4"></div>
<div class="a" style="left:272px;top:333px;width:25px;text-align:center;font-size:11px;color:#262626">5</div>
<div class="a" style="left:272px;top:364px;width:25px;height:1px;background:#c4c4c4"></div>
<div class="a" style="left:272px;top:351px;width:25px;text-align:center;font-size:11px;color:#262626">6</div>
<div class="a" style="left:272px;top:382px;width:25px;height:1px;background:#c4c4c4"></div>
<div class="a" style="left:272px;top:369px;width:25px;text-align:center;font-size:11px;color:#262626">7</div>
<div class="a" style="left:272px;top:400px;width:25px;height:1px;background:#c4c4c4"></div>
<div class="a" style="left:272px;top:387px;width:25px;text-align:center;font-size:11px;color:#262626">8</div>
<div class="a" style="left:272px;top:418px;width:25px;height:1px;background:#c4c4c4"></div>
<div class="a" style="left:272px;top:405px;width:25px;text-align:center;font-size:11px;color:#262626">9</div>
<div class="a" style="left:272px;top:436px;width:25px;height:1px;background:#c4c4c4"></div>
<div class="a" style="left:272px;top:423px;width:25px;text-align:center;font-size:11px;color:#262626">10</div>
<div class="a" style="left:272px;top:437px;width:25px;height:17px;background:#d2d2d2"></div>
<div class="a" style="left:296px;top:436px;width:2px;height:19px;background:#217346"></div>
<div class="a" style="left:272px;top:454px;width:25px;height:1px;background:#c4c4c4"></div>
<div class="a" style="left:272px;top:441px;width:25px;text-align:center;font-size:11px;color:#217346">11</div>
<div class="a" style="left:272px;top:472px;width:25px;height:1px;background:#c4c4c4"></div>
<div class="a" style="left:272px;top:459px;width:25px;text-align:center;font-size:11px;color:#262626">12</div>
<div class="a" style="left:272px;top:490px;width:25px;height:1px;background:#c4c4c4"></div>
<div class="a" style="left:272px;top:477px;width:25px;text-align:center;font-size:11px;color:#262626">13</div>
<div class="a" style="left:272px;top:508px;width:25px;height:1px;background:#c4c4c4"></div>
<div class="a" style="left:272px;top:495px;width:25px;text-align:center;font-size:11px;color:#262626">14</div>
<span class="cell" style="left:300px;top:261px;font-weight:bold;font-size:10.6px;letter-spacing:-0.091px">REQUIREMENTS</span>
<span class="cell" style="left:300px;top:278px;letter-spacing:0.019px">Make the design interface simple and easy to navigate</span>
<span class="cell" style="left:300px;top:296px;letter-spacing:0.109px">Choose a better colour combination</span>
<span class="cell" style="left:300px;top:314px;letter-spacing:0.134px">Use more distinct icons for representation</span>
<span class="cell" style="left:300px;top:332px;letter-spacing:-0.1px">Create a more organised Settings Tab</span>
<span class="cell" style="left:300px;top:350px;letter-spacing:0.224px">Compatibility with iOS</span>
<span class="cell" style="left:300px;top:368px;letter-spacing:-0.006px">Design a good dashboard for users</span>
<span class="cell" style="left:300px;top:386px;letter-spacing:-0.011px">Bookmark path way should be just like Google Chromes Path way.</span>
<span class="cell" style="left:300px;top:404px;letter-spacing:-0.042px">Navigate book page easily</span>
<span class="cell" style="left:300px;top:422px;letter-spacing:0.061px">Swipe interaction for moving through pages</span>
<span class="cell" style="left:300px;top:440px;letter-spacing:-0.129px">Create Desktop Version</span>
<span class="cell" style="left:670px;top:261px;font-weight:bold;font-size:10.6px;letter-spacing:0.5px">MUST (M)</span>
<span class="cell" style="left:747px;top:261px;font-weight:bold;font-size:10.6px;letter-spacing:0px">SHOULD (S)</span>
<span class="cell" style="left:823px;top:261px;font-weight:bold;font-size:10.6px;letter-spacing:0px">COULD (C)</span>
<span class="cell" style="left:899px;top:261px;font-weight:bold;font-size:10.6px;letter-spacing:0.6px">WON'T</span>
<span class="cell" style="left:670px;top:279px;font-weight:bold;font-size:10.6px">xxxxx</span>
<span class="cell" style="left:670px;top:297px;font-weight:bold;font-size:10.6px">xxxxx</span>
<span class="cell" style="left:670px;top:315px;font-weight:bold;font-size:10.6px">xxxxx</span>
<span class="cell" style="left:670px;top:369px;font-weight:bold;font-size:10.6px">xxxxx</span>
<span class="cell" style="left:747px;top:333px;font-weight:bold;font-size:10.6px">xxxxx</span>
<span class="cell" style="left:747px;top:351px;font-weight:bold;font-size:10.6px">xxxxx</span>
<span class="cell" style="left:747px;top:387px;font-weight:bold;font-size:10.6px">xxxxx</span>
<span class="cell" style="left:747px;top:405px;font-weight:bold;font-size:10.6px">xxxxx</span>
<span class="cell" style="left:823px;top:423px;font-weight:bold;font-size:10.6px">xxxxx</span>
<span class="cell" style="left:899px;top:441px;font-weight:bold;font-size:10.6px">xxxxx</span>
<div class="a" style="left:895px;top:435px;width:84px;height:21px;border:2px solid #217346"></div>
<div class="a" style="left:897px;top:437px;width:80px;height:17px;border:1px solid #fff"></div>
<div class="a" style="left:974px;top:451px;width:7px;height:7px;background:#217346;border:1px solid #fff"></div>
<div class="a" style="left:1345px;top:240px;width:21px;height:267px;background:#e6e6e6"></div>
<div class="a" style="left:1348px;top:242px;width:15px;height:15px;background:#fff;border:1px solid #ababab"></div>
<svg class="a" style="left:1351px;top:247px" width="9" height="5"><path d="M0.5 4.5 L4.5 0.5 L8.5 4.5z" fill="#666"/></svg>
<div class="a" style="left:1348px;top:256px;width:15px;height:260px;background:#fff;border:1px solid #ababab"></div>
<!--/GRID-->
</body></html>
